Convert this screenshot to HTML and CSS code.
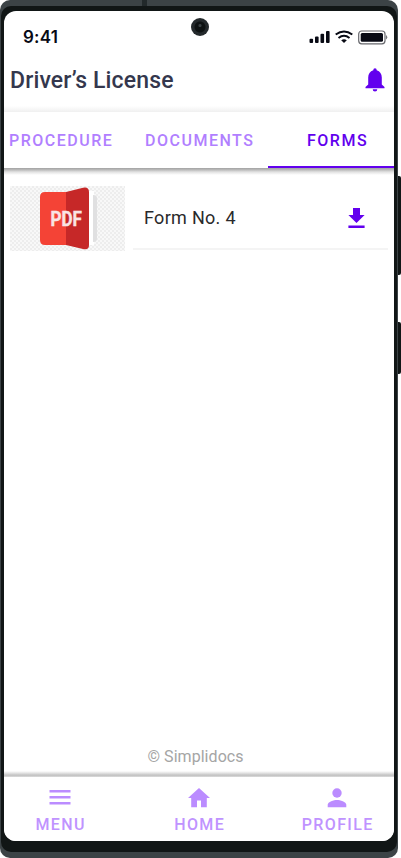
FILE: index.html
```html
<!DOCTYPE html>
<html lang="en">
<head>
<meta charset="utf-8">
<title>Driver’s License</title>
<link rel="stylesheet" href="styles.css">
</head>
<body>
<div class="phone">
  <i class="antenna"></i>
  <i class="side-button volume"></i>
  <i class="side-button power"></i>
  <div class="bezel">
    <main class="screen">
      <i class="camera"></i>
      <div class="status">
        <span class="time">9:41</span>
        <svg class="status-icons" width="80" height="16" viewBox="0 0 80 16">
          <g fill="#080a14"><rect x="1.500" y="9.700" width="3.600" height="4.300" rx="1"/><rect x="7" y="7.500" width="3.600" height="6.500" rx="1"/><rect x="12.500" y="4.800" width="3.600" height="9.200" rx="1"/><rect x="18" y="1.900" width="3.600" height="12.100" rx="1"/></g>
          <g fill="none" stroke="#080a14" stroke-width="2"><path d="M27.700 5.500Q36-.5 44.300 5.500"/><path d="M30.500 9Q36 4.600 41.500 9"/></g>
          <path d="M33.200 11.300Q36 9.300 38.800 11.300L36 14Z" fill="#080a14"/>
          <rect x="50.700" y="2" width="26.300" height="12.800" rx="3" fill="none" stroke="#66676c" stroke-width="1.200"/>
          <rect x="52.700" y="4" width="22.300" height="8.800" rx="1.500" fill="#080a14"/>
          <path d="M78 6Q80.500 8.200 78 10.500Z" fill="#77787c"/>
        </svg>
      </div>
      <header class="header">
        <h1>Driver’s License</h1>
        <svg class="bell" width="20" height="24" viewBox="0 0 20 24"><path fill="#6200ee" d="M8.300 2.200V1.900a1.700 1.700 0 0 1 3.400 0v.3C15 3.200 16.800 6 16.800 9.500v7l2.700 2.500v1.300H.5V19l2.700-2.500v-7c0-3.500 1.800-6.300 5.100-7.300ZM7.700 21.300h4.600a2.300 2.300 0 0 1-4.600 0Z"/></svg>
      </header>
      <nav class="tabs">
        <span class="tab procedure">PROCEDURE</span>
        <span class="tab documents">DOCUMENTS</span>
        <span class="tab forms">FORMS</span>
      </nav>
      <section class="list">
        <div class="item">
          <div class="thumb">
            <svg width="60" height="64" viewBox="0 0 60 64">
              <path d="M48 5h7v54h-7Z" fill="#fff"/><path d="M54 9q4 0 4 3v41q0 3-4 3Z" fill="#e0e0e1"/>
              <path d="M31 6H6Q1 6 1 11v43q0 5 5 5h25Z" fill="#f44336"/>
              <path d="M27 6 44 1.700Q50 .5 50 6v53q0 5.500-6 4L27 59Z" fill="#c62828"/>
              <text class="pdf" x="11.500" y="39.500" textLength="31.500" lengthAdjust="spacingAndGlyphs">PDF</text>
            </svg>
          </div>
          <div class="row">
            <span class="name">Form No. 4</span>
            <svg class="download" width="17" height="21" viewBox="0 0 17 21"><path fill="#6200ee" d="M5 0h7v7h4.600L8.500 15 .4 7H5ZM.4 17.400h16.200v2.600H.4Z"/></svg>
          </div>
        </div>
      </section>
      <footer class="copyright">© Simplidocs</footer>
      <nav class="bottom">
        <div class="link menu"><svg width="24" height="22" viewBox="0 0 24 22"><path fill="#bb8cff" d="M1.500 3h21V5.400h-21Zm0 6h21V11.400h-21Zm0 6h21v2.400h-21Z"/></svg><span>MENU</span></div>
        <div class="link home"><svg width="24" height="22" viewBox="0 0 24 22"><path fill="#bb8cff" d="M12 .900 23 11h-3.200v9.200H14V13.600h-4v6.600H4.200V11H1Z"/></svg><span>HOME</span></div>
        <div class="link profile"><svg width="24" height="22" viewBox="0 0 24 22"><g fill="#bb8cff"><circle cx="12" cy="6" r="4.700"/><path d="M2.700 20.200v-2.500c0-3.200 6.200-4.800 9.300-4.800s9.300 1.600 9.300 4.800v2.500Z"/></g></svg><span>PROFILE</span></div>
      </nav>
    </main>
  </div>
</div>
</body>
</html>
```
FILE: styles.css
```css
* { box-sizing: border-box; }
body { margin: 0; background: #fff; font-family: Roboto, sans-serif; overflow: hidden; }
svg { display: block; flex: none; }
.phone { position: relative; width: 398px; height: 858px; padding: 6px 1px; background: #3c4346; border-radius: 10px; }
.bezel { height: 846px; padding: 5px 3px 11px; background: #111616; border-radius: 10px; }
.antenna { position: absolute; left: 142px; top: 0; width: 5px; height: 6px; background: #22292b; }
.side-button { position: absolute; left: 398px; width: 3px; background: #111616; border-radius: 0 2px 2px 0; }
.volume { top: 176px; height: 99px; }
.power { top: 322px; height: 52px; }
.screen { position: relative; display: flex; flex-direction: column; width: 390px; height: 830px; background: #fff; border-radius: 12px; overflow: hidden; }
.camera { position: absolute; left: 187px; top: 7px; width: 18px; height: 18px; border-radius: 50%; background: radial-gradient(circle at 50% 42%, #3b4245 0 1px, transparent 2px), radial-gradient(circle, #0d1112 5px, #24292c 6px); }
.status { display: flex; justify-content: space-between; align-items: center; height: 52px; padding: 0 6px 0 19px; }
.time { font: 600 17px/20px Inter, sans-serif; letter-spacing: 0.2px; color: #080a14; }
.header { display: flex; justify-content: space-between; align-items: center; height: 49px; padding: 0 9px 14px 6px; background: linear-gradient(#fff 43px, #f0f0f0); }
.bell { margin-top: -1px; }
h1 { margin: 0; font-size: 23px; line-height: 30px; font-weight: 500; letter-spacing: 0.15px; color: #34374d; }
.tabs { position: relative; z-index: 1; display: grid; grid-template-columns: 128px 136px 126px; height: 56px; background: #fff; }
.tabs::after { content: ""; position: absolute; top: 100%; left: 0; right: 0; height: 7px; background: linear-gradient(#a2a2a2, #bdbdbd 2px, #e2e2e2 4px, #fff); }
.tab { height: 56px; padding-left: 5px; font-size: 16px; line-height: 57px; font-weight: 500; letter-spacing: 1.5px; color: #b17fff; white-space: nowrap; }
.documents { padding-left: 13px; }
.forms { padding-left: 39px; color: #6200ee; border-bottom: 2px solid #6200ee; }
.list { flex: 1; padding: 18px 6px 0; }
.item { display: flex; gap: 8px; height: 65px; }
.thumb { width: 115px; padding-left: 29px; background: repeating-conic-gradient(#ededed 0 25%, #f8f8f8 0 50%) 0 0 / 4px 4px; }
.pdf { font: 700 20px Roboto, sans-serif; fill: #f9e4e4; stroke: #f9e4e4; stroke-width: 0.400px; }
.row { flex: 1; display: flex; align-items: center; justify-content: space-between; height: 64px; padding: 0 23.500px 0 11px; border-bottom: 2px solid #f4f4f4; }
.download { margin-top: 2px; }
.name { font-size: 18px; color: #29292b; letter-spacing: 0.3px; }
.copyright { height: 40px; padding-right: 7px; font-size: 16px; line-height: 42px; letter-spacing: 0.05px; text-align: center; color: #a5a5a5; }
.bottom { position: relative; display: grid; grid-template-columns: 112px 166px 110px; height: 65px; padding-top: 11px; background: #fff; }
.bottom::before { content: ""; position: absolute; bottom: 100%; margin-bottom: -1px; left: 0; right: 0; height: 6px; background: linear-gradient(#fff, #e4e4e4 2px, #c5c5c5 4px, #c5c5c5 5px, #e4e4e4); }
.link { display: flex; flex-direction: column; align-items: center; font-size: 16px; line-height: 20px; font-weight: 500; letter-spacing: 1.4px; color: #bf93ff; }
.link span { margin: 6px -1.400px 0 0; }
```
